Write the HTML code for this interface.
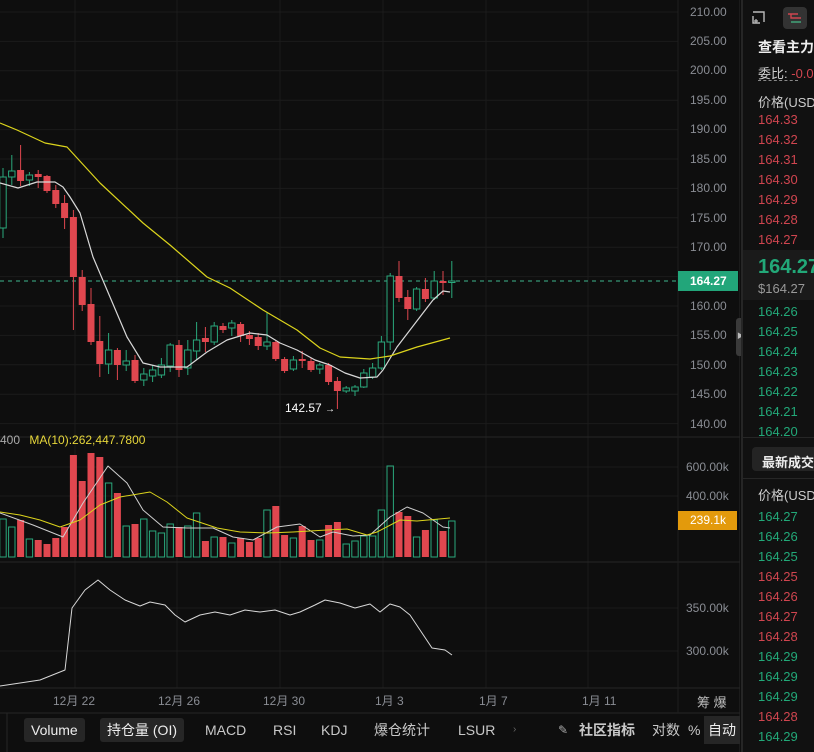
<!DOCTYPE html>
<html><head><meta charset="utf-8">
<style>
*{margin:0;padding:0;box-sizing:border-box}
body{width:814px;height:752px;background:#0e0e0e;overflow:hidden;position:relative;font-family:"Liberation Sans","Noto Sans CJK SC",sans-serif;color:#ddd}
.ab{position:absolute;white-space:nowrap}
.ax{color:#8a8d94;font-size:12px}
.rp{position:absolute;left:741px;top:0;width:73px;height:752px;background:#111;border-left:2px solid #262626;overflow:hidden}
.rp div{position:absolute;left:15px;white-space:nowrap;font-size:13px}
.r{color:#d0454f}.g{color:#22a878}
.tb{position:absolute;top:718px;height:24px;line-height:24px;font-size:14px;color:#c8c8c8;white-space:nowrap}
</style></head><body>
<svg id="c" width="740" height="752" style="position:absolute;left:0;top:0"></svg>

<div class="ab ax" style="left:690px;top:5px">210.00</div>
<div class="ab ax" style="left:690px;top:34px">205.00</div>
<div class="ab ax" style="left:690px;top:63px">200.00</div>
<div class="ab ax" style="left:690px;top:93px">195.00</div>
<div class="ab ax" style="left:690px;top:122px">190.00</div>
<div class="ab ax" style="left:690px;top:152px">185.00</div>
<div class="ab ax" style="left:690px;top:181px">180.00</div>
<div class="ab ax" style="left:690px;top:211px">175.00</div>
<div class="ab ax" style="left:690px;top:240px">170.00</div>
<div class="ab ax" style="left:690px;top:299px">160.00</div>
<div class="ab ax" style="left:690px;top:328px">155.00</div>
<div class="ab ax" style="left:690px;top:358px">150.00</div>
<div class="ab ax" style="left:690px;top:387px">145.00</div>
<div class="ab ax" style="left:690px;top:417px">140.00</div>
<div class="ab" style="left:678px;top:271px;width:60px;height:20px;background:#22a67a;color:#fff;font-size:12px;font-weight:bold;line-height:20px;padding-left:12px">164.27</div>
<div class="ab ax" style="left:686px;top:460px">600.00k</div>
<div class="ab ax" style="left:686px;top:489px">400.00k</div>
<div class="ab" style="left:678px;top:511px;width:59px;height:19px;background:#e39a0c;color:#fff;font-size:12px;line-height:19px;padding-left:12px">239.1k</div>
<div class="ab ax" style="left:686px;top:601px">350.00k</div>
<div class="ab ax" style="left:686px;top:644px">300.00k</div>

<div class="ab" style="left:0;top:433px;font-size:12px;color:#aaa">400 <span style="color:#e6d63a;margin-left:6px">MA(10):262,447.7800</span></div>
<div class="ab" style="left:285px;top:401px;font-size:12px;color:#fff">142.57 <span style="font-size:10px">→</span></div>

<div class="ab ax" style="left:53px;top:692px">12月 22</div>
<div class="ab ax" style="left:158px;top:692px">12月 26</div>
<div class="ab ax" style="left:263px;top:692px">12月 30</div>
<div class="ab ax" style="left:375px;top:692px">1月 3</div>
<div class="ab ax" style="left:479px;top:692px">1月 7</div>
<div class="ab ax" style="left:582px;top:692px">1月 11</div>
<div class="ab" style="left:697px;top:692px;font-size:13px;color:#bbb">筹 爆</div>

<div class="tb" style="left:24px;padding:0 7px;background:#262626;border-radius:3px;color:#eee">Volume</div>
<div class="tb" style="left:100px;padding:0 7px;background:#262626;border-radius:3px;color:#eee">持仓量 (OI)</div>
<div class="tb" style="left:205px">MACD</div>
<div class="tb" style="left:273px">RSI</div>
<div class="tb" style="left:321px">KDJ</div>
<div class="tb" style="left:374px">爆仓统计</div>
<div class="tb" style="left:458px">LSUR</div>
<div class="tb" style="left:513px;font-size:10px;color:#666">›</div>
<div class="tb" style="left:558px;font-size:12px;color:#aaa">✎</div>
<div class="tb" style="left:579px;font-weight:bold">社区指标</div>
<div class="tb" style="left:652px">对数</div>
<div class="tb" style="left:688px">%</div>
<div class="tb" style="left:704px;width:36px;padding-left:4px;background:#262626;color:#eee;top:716px;height:28px;line-height:28px">自动</div>

<div class="ab" style="left:736px;top:318px;width:7px;height:38px;background:#3a3a3a;border-radius:3px 0 0 3px;color:#bbb;font-size:7px;line-height:38px;padding-left:1px">▶</div>

<div class="rp">
  <svg style="position:absolute;left:8px;top:10px" width="16" height="16"><path d="M2 2H13V12M2 6V13H9M2 13" fill="none" stroke="#bbb" stroke-width="1.4"/><path d="M3 11h4M5 9v4" stroke="#bbb" stroke-width="1.2"/></svg>
  <div style="left:40px;top:7px;width:24px;height:22px;background:#333;border-radius:4px"></div>
  <svg style="position:absolute;left:44px;top:11px" width="16" height="14"><path d="M1 3H11M4 3V7H14M4 11H14" fill="none" stroke="#d0454f" stroke-width="1.4"/><path d="M4 11H14" stroke="#22a878" stroke-width="1.4"/></svg>
  <div style="top:37px;font-weight:bold;color:#eee;font-size:14px">查看主力持</div>
  <div style="top:63px;color:#ccc">委比: <span class="r">-0.05</span></div>
  <div style="top:80px;width:40px;border-top:1px dashed #888"></div>
  <div style="top:92px;color:#ccc">价格(USD)</div>
  <div class="r" style="top:112px">164.33</div>
  <div class="r" style="top:132px">164.32</div>
  <div class="r" style="top:152px">164.31</div>
  <div class="r" style="top:172px">164.30</div>
  <div class="r" style="top:192px">164.29</div>
  <div class="r" style="top:212px">164.28</div>
  <div class="r" style="top:232px">164.27</div>
  <div style="left:0;top:250px;width:73px;height:50px;background:#1a1a1a"></div>
  <div class="g" style="top:256px;font-size:20px;font-weight:bold">164.27</div>
  <div style="top:281px;color:#999;font-size:13px">$164.27</div>
  <div class="g" style="top:304px">164.26</div>
  <div class="g" style="top:324px">164.25</div>
  <div class="g" style="top:344px">164.24</div>
  <div class="g" style="top:364px">164.23</div>
  <div class="g" style="top:384px">164.22</div>
  <div class="g" style="top:404px">164.21</div>
  <div class="g" style="top:424px">164.20</div>
  <div style="left:0;top:437px;width:73px;border-top:1px solid #262626"></div>
  <div style="left:9px;top:447px;width:70px;height:24px;background:#242424;border-radius:4px"></div>
  <div style="left:19px;top:452px;color:#eee;font-weight:bold;font-size:13px">最新成交</div>
  <div style="left:0;top:478px;width:73px;border-top:1px solid #262626"></div>
  <div style="top:485px;color:#ccc">价格(USD)</div>
  <div class="g" style="top:509px">164.27</div>
  <div class="g" style="top:529px">164.26</div>
  <div class="g" style="top:549px">164.25</div>
  <div class="r" style="top:569px">164.25</div>
  <div class="r" style="top:589px">164.26</div>
  <div class="r" style="top:609px">164.27</div>
  <div class="r" style="top:629px">164.28</div>
  <div class="g" style="top:649px">164.29</div>
  <div class="g" style="top:669px">164.29</div>
  <div class="g" style="top:689px">164.29</div>
  <div class="r" style="top:709px">164.28</div>
  <div class="g" style="top:729px">164.29</div>
</div>

<script>
var s=document.getElementById('c'),h='';
function L(x1,y1,x2,y2,c,w,d){h+='<line x1="'+x1+'" y1="'+y1+'" x2="'+x2+'" y2="'+y2+'" stroke="'+c+'" stroke-width="'+(w||1)+'"'+(d?' stroke-dasharray="'+d+'"':'')+'/>';}
function P(p,c,w){h+='<polyline fill="none" stroke-linejoin="round" stroke="'+c+'" stroke-width="'+(w||1.2)+'" points="'+p.map(function(a){return a.join(',')}).join(' ')+'"/>';}
for(var y=12;y<430;y+=29.4)L(0,y,678,y,'#1b1b1b');
[467,496].forEach(function(y){L(0,y,678,y,'#1b1b1b')});
[608,651].forEach(function(y){L(0,y,678,y,'#1b1b1b')});
[75,177,280,383,486,588].forEach(function(x){L(x,0,x,688,'#1b1b1b')});
L(0,437,740,437,'#262626');L(0,562,740,562,'#262626');L(0,688,740,688,'#262626');L(0,713,740,713,'#262626');
L(7,713,7,752,'#262626');L(740,0,740,752,'#262626');
L(678,0,678,713,'#1f1f1f');
L(0,281,678,281,'#3fb58e',1,'4,4');
var C=[[1,177,228,168,238],[1,171,177,155,185],[0,170,181,145,186],[1,175,180,172,186],[0,174,177,170,188],[0,176,191,175,193],[0,190,204,185,208],[0,203,218,195,229],[0,217,277,210,330],[0,277,305,270,311],[0,304,342,288,345],[0,341,364,316,377],[1,350,364,333,374],[0,350,365,348,380],[1,361,365,350,371],[0,360,381,355,383],[1,374,380,368,386],[1,370,376,365,382],[1,365,375,358,378],[1,345,366,343,372],[0,345,370,340,377],[1,350,368,340,375],[1,340,351,322,360],[0,338,342,327,352],[1,326,342,322,345],[0,326,330,323,333],[1,323,328,320,336],[0,324,336,322,342],[0,335,339,331,345],[0,337,346,333,350],[1,342,346,312,350],[0,342,359,340,361],[0,359,371,357,373],[1,360,369,356,371],[0,359,361,351,368],[0,361,370,358,372],[1,365,369,363,374],[0,365,382,363,385],[0,381,391,377,409],[1,388,391,386,393],[1,387,391,385,396],[1,373,387,369,388],[1,368,377,363,379],[1,342,368,336,370],[1,276,342,273,350],[0,276,298,261,302],[0,297,309,290,320],[1,289,309,287,311],[0,289,299,278,302],[1,281,298,271,300],[0,281,283,271,295],[1,281,282,261,298]];
var V=[519,527,520,539,540,544,538,527,455,481,453,457,483,493,526,524,519,531,533,524,527,526,513,541,537,537,543,538,542,538,510,506,535,538,526,540,540,525,522,544,541,536,536,510,466,512,516,537,530,520,531,521];
C.forEach(function(c,i){var x=3+i*8.8,col=c[0]?'#2aa87c':'#e0474f';
 L(x,c[3],x,c[4],col);
 var ht=Math.max(c[2]-c[1],1.5);
 if(c[0])h+='<rect x="'+(x-3.2)+'" y="'+c[1]+'" width="6.4" height="'+ht+'" fill="#0e0e0e" stroke="'+col+'" stroke-width="1"/>';
 else h+='<rect x="'+(x-3.5)+'" y="'+c[1]+'" width="7" height="'+ht+'" fill="'+col+'"/>';
 var v=V[i];
 if(c[0])h+='<rect x="'+(x-3.2)+'" y="'+v+'" width="6.4" height="'+(557-v)+'" fill="none" stroke="'+col+'" stroke-width="1"/>';
 else h+='<rect x="'+(x-3.5)+'" y="'+v+'" width="7" height="'+(557-v)+'" fill="'+col+'"/>';
});
P([[0,183],[18,188],[37,182],[55,182],[63,187],[70,197],[80,213],[93,257],[110,297],[127,337],[143,363],[160,367],[187,367],[207,352],[227,340],[240,336],[250,333],[267,335],[280,343],[297,350],[315,360],[330,365],[345,373],[360,378],[377,377],[383,370],[397,347],[423,313],[433,300],[443,291],[450,292]],'#d8d8d8');
P([[0,123],[17,130],[45,143],[67,147],[100,183],[143,223],[170,245],[207,277],[230,288],[263,310],[297,330],[320,348],[340,357],[370,359],[390,356],[417,347],[450,338]],'#dcd41c');
P([[0,513],[33,525],[63,537],[83,503],[108,466],[127,483],[143,510],[163,527],[187,528],[213,528],[233,537],[253,540],[277,527],[300,524],[320,537],[333,532],[353,536],[370,535],[390,517],[407,507],[423,513],[443,527],[450,528]],'#cfcfcf',1);
P([[0,512],[20,515],[40,520],[60,527],[80,520],[100,505],[120,497],[150,492],[167,502],[187,518],[217,528],[240,532],[267,533],[293,532],[327,530],[347,529],[367,535],[377,532],[400,520],[417,521],[450,518]],'#dcd41c',1);
P([[0,686],[40,680],[65,670],[72,608],[85,590],[98,580],[110,590],[125,600],[140,606],[150,602],[165,605],[175,615],[185,622],[200,615],[215,612],[230,615],[245,610],[260,612],[275,610],[290,615],[300,612],[315,605],[325,600],[340,603],[355,608],[370,604],[380,612],[390,604],[400,607],[410,615],[420,630],[432,648],[445,650],[452,655]],'#d8d8d8',1);
s.innerHTML=h;
</script>
</body></html>
